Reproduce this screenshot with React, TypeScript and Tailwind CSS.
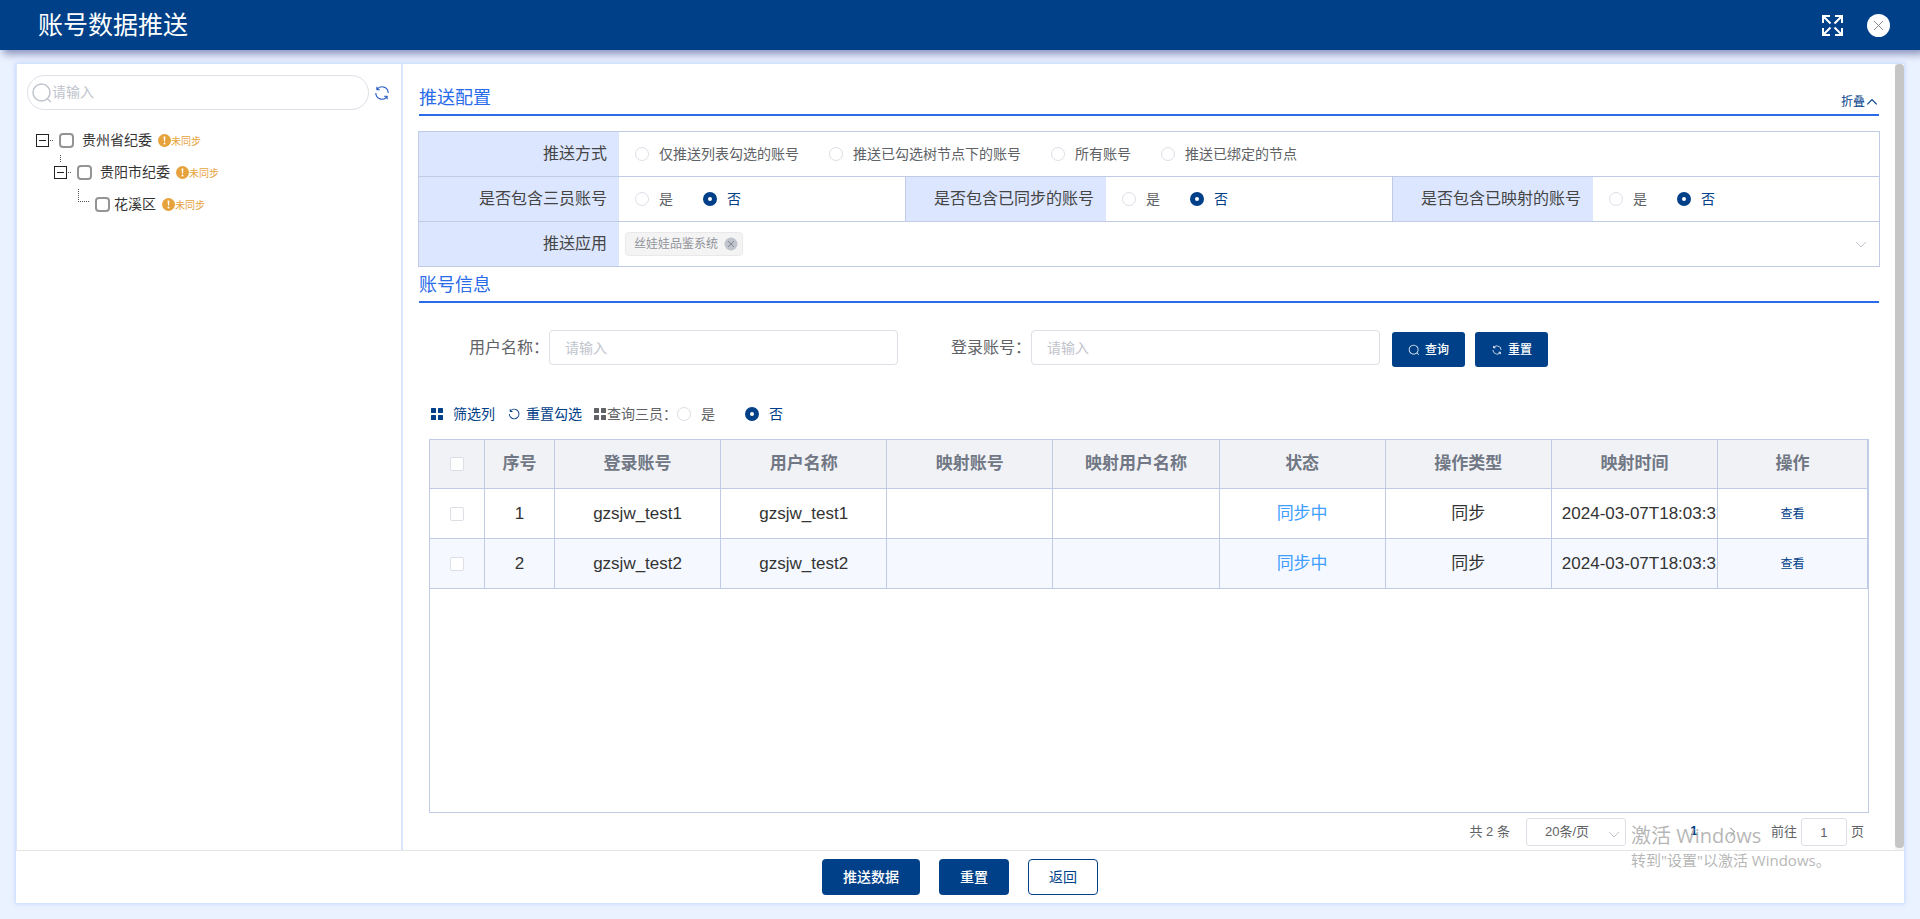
import type { ReactNode } from 'react';

const REFRESH =
  'M771.776 794.88A384 384 0 0 1 128 512h64a320 320 0 0 0 555.712 216.448H654.72a32 32 0 1 1 0-64h149.056a32 32 0 0 1 32 32v148.928a32 32 0 1 1-64 0v-50.56zM276.288 295.616h92.992a32 32 0 0 1 0 64H220.16a32 32 0 0 1-32-32V178.56a32 32 0 0 1 64 0v50.56A384 384 0 0 1 896.128 512h-64a320 320 0 0 0-555.776-216.384z';
const REFRESH_LEFT =
  'M289.088 296.704h92.992a32 32 0 0 1 0 64H232.96a32 32 0 0 1-32-32V179.712a32 32 0 0 1 64 0v50.56a384 384 0 0 1 643.84 282.88 384 384 0 0 1-383.936 384 384 384 0 0 1-384-384h64a320 320 0 1 0 640 0 320 320 0 0 0-555.712-216.448z';
const SEARCH =
  'm795.904 750.72 124.992 124.928a32 32 0 0 1-45.248 45.248L750.656 795.904a416 416 0 1 1 45.248-45.248zM480 832a352 352 0 1 0 0-704 352 352 0 0 0 0 704z';

function Glyph({ d, className }: { d: string; className: string }) {
  return (
    <svg viewBox="0 0 1024 1024" fill="currentColor" aria-hidden="true" className={className}>
      <path d={d} />
    </svg>
  );
}

function Chevron({ dir, className }: { dir: 'up' | 'down' | 'left' | 'right'; className: string }) {
  const points = {
    up: '2,8 6,4 10,8',
    down: '1,4 6,9 11,4',
    left: '8,1 3,6 8,11',
    right: '4,1 9,6 4,11',
  }[dir];
  return (
    <svg viewBox="0 0 12 12" fill="none" stroke="currentColor" aria-hidden="true" className={className}>
      <polyline points={points} />
    </svg>
  );
}

function GridIcon() {
  return (
    <svg viewBox="0 0 12 12" fill="currentColor" aria-hidden="true" className="size-3 shrink-0">
      <rect x="0" y="0" width="5" height="5" rx="0.5" />
      <rect x="7" y="0" width="5" height="5" rx="0.5" />
      <rect x="0" y="7" width="5" height="5" rx="0.5" />
      <rect x="7" y="7" width="5" height="5" rx="0.5" />
    </svg>
  );
}

function Radio({ name, label, checked }: { name: string; label: string; checked?: boolean }) {
  return (
    <label className="mr-[30px] flex items-center gap-[10px] whitespace-nowrap text-sm leading-5 text-[#606266] has-checked:text-[#004088]">
      <input
        type="radio"
        name={name}
        defaultChecked={checked}
        className="size-[14px] shrink-0 appearance-none rounded-full border border-[#dcdfe6] bg-white checked:border-[5px] checked:border-[#004088]"
      />
      {label}
    </label>
  );
}

function YesNo({ name }: { name: string }) {
  return (
    <>
      <Radio name={name} label="是" />
      <Radio name={name} label="否" checked />
    </>
  );
}

function Field({ label, children, divided }: { label: string; children: ReactNode; divided?: boolean }) {
  return (
    <div
      role="group"
      aria-label={label}
      className={divided ? 'flex min-w-0 flex-1 border-l border-[#c0cce6]' : 'flex min-w-0 flex-1'}
    >
      <div className="flex w-[200px] shrink-0 items-center justify-end bg-[#dce6ff] pr-3 text-base text-[#444]">
        {label}
      </div>
      <div className="flex min-w-0 flex-1 items-center">{children}</div>
    </div>
  );
}

function TreeRow({ name, indent, textGap, toggle }: { name: string; indent: string; textGap: string; toggle: boolean }) {
  return (
    <li className={`flex h-8 items-center ${indent}`}>
      {toggle ? (
        <button type="button" aria-label={`收起${name}`} className="mt-[2px] flex w-[23px] items-center">
          <svg viewBox="0 0 23 14" fill="none" shapeRendering="crispEdges" className="h-[14px] w-[23px]">
            <rect x="0.5" y="0.5" width="12" height="12" stroke="#222" />
            <path d="M3 6.5h7" stroke="#222" />
            <path d="M14 6.5h3" stroke="#555" strokeDasharray="1 1" />
          </svg>
        </button>
      ) : (
        <svg
          viewBox="0 0 17 14"
          fill="none"
          shapeRendering="crispEdges"
          aria-hidden="true"
          className="-mt-4 h-[14px] w-[17px]"
        >
          <path d="M0.5 0v12" stroke="#555" strokeDasharray="1 1" />
          <path d="M0 12.5h12" stroke="#555" strokeDasharray="1 1" />
        </svg>
      )}
      <label className={`flex items-center text-sm leading-5 text-[#333] ${textGap}`}>
        <input
          type="checkbox"
          className="size-[15px] appearance-none rounded-[4px] border-2 border-[#949494] bg-white checked:bg-[#004088]"
        />
        {name}
      </label>
      <span className="ml-1.5 flex items-center text-[10px] leading-4 text-[#e6a23c]">
        <svg viewBox="0 0 13 13" aria-hidden="true" className="size-[13px]">
          <circle cx="6.5" cy="6.5" r="6.5" fill="#e6a23c" />
          <path d="M5.6 2.4h1.8l-.4 5h-1z" fill="#fff" />
          <circle cx="6.5" cy="9.4" r="1" fill="#fff" />
        </svg>
        <span className="pt-[3px]">未同步</span>
      </span>
    </li>
  );
}

function SectionTitle({ title, className, children }: { title: string; className: string; children?: ReactNode }) {
  return (
    <div className={`mx-px flex items-end justify-between border-b-2 border-[#2a6be9] pb-1 ${className}`}>
      <h2 className="text-lg leading-6 text-[#2a6be9]">{title}</h2>
      {children}
    </div>
  );
}

function SearchField({ id, label }: { id: string; label: string }) {
  return (
    <div className="flex w-[429px] min-w-0 items-center">
      <label htmlFor={id} className="w-20 shrink-0 text-base text-[#606266]">
        {label}
      </label>
      <input
        id={id}
        placeholder="请输入"
        className="h-[35px] w-full min-w-0 rounded border border-[#dcdfe6] px-[15px] text-sm text-[#606266] outline-none placeholder:text-[#c0c4cc]"
      />
    </div>
  );
}

const columns = ['登录账号', '用户名称', '映射账号', '映射用户名称', '状态', '操作类型', '映射时间'];
const rows = [
  { no: 1, account: 'gzsjw_test1', status: '同步中', type: '同步', time: '2024-03-07T18:03:32' },
  { no: 2, account: 'gzsjw_test2', status: '同步中', type: '同步', time: '2024-03-07T18:03:32' },
];

const cell = 'overflow-hidden whitespace-nowrap border-r border-b border-[#c0cce6] px-[10px]';
const box =
  'mx-auto block size-[14px] appearance-none rounded-[2px] border border-[#dcdfe6] bg-white checked:bg-[#004088]';
const pageNav = 'flex h-7 w-[38px] items-center justify-center';

export default function App() {
  return (
    <div className="flex h-screen min-h-[640px] flex-col overflow-hidden bg-[#ebf2ff] font-['Liberation_Sans','Noto_Sans_CJK_SC',sans-serif]">
      <header className="z-10 flex h-[50px] shrink-0 items-center justify-between bg-[#004088] pr-[30px] pl-[38px] shadow-[4px_3px_8px_1px_#8890bb]">
        <h1 className="text-[25px] leading-9 text-white">账号数据推送</h1>
        <div className="flex items-center gap-6">
          <button type="button" aria-label="全屏">
            <svg viewBox="0 0 21 21" fill="none" stroke="#fff" strokeWidth="2" className="size-[21px]">
              <path d="M8 1H1v7M1 1l7.5 7.5M13 1h7v7M20 1l-7.500 7.500M8 20H1v-7M1 20l7.500-7.500M13 20h7v-7M20 20l-7.500-7.500" />
            </svg>
          </button>
          <button type="button" aria-label="关闭">
            <svg viewBox="0 0 23 23" className="size-[23px]">
              <circle cx="11.500" cy="11.500" r="11.500" fill="#fff" />
              <path d="M7 7l9 9M16 7l-9 9" stroke="#8c8c8c" fill="none" />
            </svg>
          </button>
        </div>
      </header>

      <div className="mx-4 mt-[14px] mb-4 flex min-h-0 flex-1 flex-col bg-white shadow-[0_0_4px_1px_#c3d8fb]">
        <div className="flex min-h-0 flex-1">
          <aside className="w-[387px] shrink-0 border-r-2 border-l border-[#dce6fa] pt-[11px] pl-[10px]">
            <div className="flex items-center gap-1">
              <div className="flex h-[35px] w-[342px] items-center rounded-full border border-[#dcdfe6] pl-1">
                <svg
                  viewBox="0 0 20 20"
                  fill="none"
                  stroke="currentColor"
                  strokeWidth="1.5"
                  aria-hidden="true"
                  className="size-5 shrink-0 text-[#c0c4cc]"
                >
                  <circle cx="9.5" cy="9.5" r="8.500" />
                  <path d="M15 15.500l4 3.500" />
                </svg>
                <input
                  aria-label="搜索"
                  placeholder="请输入"
                  className="h-[33px] min-w-0 flex-1 bg-transparent pb-0.5 text-sm outline-none placeholder:text-[#c0c4cc]"
                />
              </div>
              <button type="button" aria-label="刷新" className="text-[#2a5cc8]">
                <Glyph d={REFRESH} className="size-[18px]" />
              </button>
            </div>
            <div className="pt-[14px]">
              <ul>
                <TreeRow name="贵州省纪委" indent="pl-[9px]" textGap="gap-2" toggle />
                <li className="relative">
                  <svg
                    viewBox="0 0 1 8"
                    shapeRendering="crispEdges"
                    aria-hidden="true"
                    className="absolute -top-[1px] left-[33px] h-2 w-px"
                  >
                    <path d="M0.500 0v8" stroke="#555" strokeDasharray="1 1" />
                  </svg>
                  <ul>
                    <TreeRow name="贵阳市纪委" indent="pl-[27px]" textGap="gap-2" toggle />
                    <TreeRow name="花溪区" indent="pl-[51px]" textGap="gap-1" toggle={false} />
                  </ul>
                </li>
              </ul>
            </div>
          </aside>

          <main className="flex min-w-0 flex-1 flex-col px-[15px] pb-1">
            <SectionTitle title="推送配置" className="h-[52px]">
              <button type="button" className="flex items-center text-xs leading-4 text-[#004088]">
                折叠
                <Chevron dir="up" className="size-[14px]" />
              </button>
            </SectionTitle>

            <div className="mt-[15px] divide-y divide-[#c0cce6] border border-[#c0cce6]">
              <div className="flex min-h-[45px]">
                <Field label="推送方式">
                  <div className="flex flex-wrap pl-4">
                    <Radio name="mode" label="仅推送列表勾选的账号" />
                    <Radio name="mode" label="推送已勾选树节点下的账号" />
                    <Radio name="mode" label="所有账号" />
                    <Radio name="mode" label="推送已绑定的节点" />
                  </div>
                </Field>
              </div>
              <div className="flex min-h-[45px]">
                <Field label="是否包含三员账号">
                  <div className="flex pl-4">
                    <YesNo name="admin" />
                  </div>
                </Field>
                <Field label="是否包含已同步的账号" divided>
                  <div className="flex pl-4">
                    <YesNo name="synced" />
                  </div>
                </Field>
                <Field label="是否包含已映射的账号" divided>
                  <div className="flex pl-4">
                    <YesNo name="mapped" />
                  </div>
                </Field>
              </div>
              <div className="flex min-h-11">
                <Field label="推送应用">
                  <div className="flex flex-1 items-center justify-between pr-3 pl-1.5">
                    <span className="flex h-6 items-center gap-[6px] rounded border border-[#e9e9eb] bg-[#f4f4f5] pr-1 pl-2 text-xs text-[#909399]">
                      丝娃娃品鉴系统
                      <button type="button" aria-label="移除丝娃娃品鉴系统">
                        <svg viewBox="0 0 14 14" className="size-[14px]">
                          <circle cx="7" cy="7" r="6.500" fill="#c0c4cc" />
                          <path d="M4 4l6 6M10 4l-6 6" stroke="#85888f" fill="none" />
                        </svg>
                      </button>
                    </span>
                    <button type="button" aria-label="展开选项" className="text-[#c0c4cc]">
                      <Chevron dir="down" className="size-3" />
                    </button>
                  </div>
                </Field>
              </div>
            </div>

            <SectionTitle title="账号信息" className="h-9 shrink-0" />

            <form className="flex items-start pt-[27px] pl-[51px]" onSubmit={(e) => e.preventDefault()}>
              <SearchField id="user-name" label="用户名称：" />
              <div className="w-[53px] shrink" />
              <SearchField id="login-account" label="登录账号：" />
              <div className="flex gap-[10px] pt-0.5 pl-3">
                <button
                  type="submit"
                  className="flex h-[35px] w-[73px] items-center justify-center gap-[5px] rounded-[3px] bg-[#004088] text-xs font-medium text-white"
                >
                  <Glyph d={SEARCH} className="size-3" />
                  查询
                </button>
                <button
                  type="reset"
                  className="flex h-[35px] w-[73px] items-center justify-center gap-[5px] rounded-[3px] bg-[#004088] text-xs font-medium text-white"
                >
                  <Glyph d={REFRESH} className="size-3" />
                  重置
                </button>
              </div>
            </form>

            <div className="mt-[37px] flex h-5 items-center pl-[13px] text-sm leading-5 text-[#004088]">
              <button type="button" className="flex items-center gap-[10px]">
                <GridIcon />
                筛选列
              </button>
              <button type="button" className="ml-3 flex items-center gap-[5px]">
                <Glyph d={REFRESH_LEFT} className="size-[14px]" />
                重置勾选
              </button>
              <span className="ml-3 flex items-center gap-px text-[#606266]">
                <GridIcon />
                查询三员：
              </span>
              <YesNo name="query-admin" />
            </div>

            <div className="mx-[11px] mt-[15px] min-h-[150px] flex-1 border border-[#c0cce6]">
              <table className="w-full table-fixed border-separate border-spacing-0 text-center text-[17px] leading-6 text-[#333]">
                <colgroup>
                  <col className="w-[55px]" />
                  <col className="w-[70px]" />
                  {columns.map((c) => (
                    <col key={c} />
                  ))}
                  <col className="w-[150px]" />
                </colgroup>
                <thead>
                  <tr className="h-[49px] bg-[#f0f2f6] text-[#717784]">
                    <th className={cell}>
                      <input type="checkbox" aria-label="全选" className={box} />
                    </th>
                    <th className={cell}>序号</th>
                    {columns.map((c) => (
                      <th key={c} className={cell}>
                        {c}
                      </th>
                    ))}
                    <th className={cell}>操作</th>
                  </tr>
                </thead>
                <tbody>
                  {rows.map((r) => (
                    <tr key={r.no} className="h-[50px] even:bg-[#f5f9ff]">
                      <td className={cell}>
                        <input type="checkbox" aria-label={`选择 ${r.account}`} className={box} />
                      </td>
                      <td className={cell}>{r.no}</td>
                      <td className={cell}>{r.account}</td>
                      <td className={cell}>{r.account}</td>
                      <td className={cell} />
                      <td className={cell} />
                      <td className={cell}>
                        <span className="text-[#409eff]">{r.status}</span>
                      </td>
                      <td className={cell}>{r.type}</td>
                      <td className="overflow-hidden whitespace-nowrap border-r border-b border-[#c0cce6] pl-[10px] text-left">
                        {r.time}
                      </td>
                      <td className={cell}>
                        <a href="#view" className="block text-xs text-[#004088]">
                          查看
                        </a>
                      </td>
                    </tr>
                  ))}
                </tbody>
              </table>
            </div>

            <nav
              aria-label="分页"
              className="relative mt-[5px] flex h-7 items-center justify-end pr-4 text-[13px] text-[#606266]"
            >
              <span>共 2 条</span>
              <span className="relative ml-4">
                <select
                  aria-label="每页条数"
                  className="h-7 w-[100px] appearance-none rounded-[3px] border border-[#dcdfe6] bg-white pl-[18px] text-[13px] outline-none"
                >
                  <option>20条/页</option>
                  <option>50条/页</option>
                </select>
                <Chevron dir="down" className="pointer-events-none absolute top-[10px] right-[6px] size-3 text-[#c0c4cc]" />
              </span>
              <button type="button" aria-label="上一页" className={`ml-[11px] text-[#a8abb2] ${pageNav}`}>
                <Chevron dir="left" className="size-[10px]" />
              </button>
              <button type="button" aria-current="page" className={`pb-0.5 font-bold text-[#004088] ${pageNav}`}>
                1
              </button>
              <button type="button" aria-label="下一页" className={`text-[#606266] ${pageNav}`}>
                <Chevron dir="right" className="size-[10px]" />
              </button>
              <label className="ml-5 flex items-center gap-1">
                前往
                <input
                  defaultValue="1"
                  className="h-7 w-[46px] rounded-[3px] border border-[#dcdfe6] bg-white text-center outline-none"
                />
                页
              </label>
              <div className="pointer-events-none absolute top-1 right-[55px] w-[194px] whitespace-nowrap font-['Open_Sans','Noto_Sans_CJK_SC',sans-serif] text-[#a9a9a9]/85">
                <p className="text-[20px] leading-7">激活 Windows</p>
                <p className="text-[15px] leading-5">
                  转到"设置"以激活 Windows。
                </p>
              </div>
            </nav>
          </main>

          <div aria-hidden="true" className="w-[9px] shrink-0 bg-[#f5f5f5] pb-0.5">
            <div className="h-full rounded-[4px] bg-[#c6c6c6]" />
          </div>
        </div>

        <footer className="flex h-[53px] shrink-0 items-center justify-center gap-[19px] border-t border-[#e4e4e4] text-sm">
          <button type="button" className="h-9 rounded bg-[#004088] px-[21px] font-medium text-white">
            推送数据
          </button>
          <button type="button" className="h-9 rounded bg-[#004088] px-[21px] font-medium text-white">
            重置
          </button>
          <button type="button" className="h-9 rounded border border-[#004088] bg-white px-5 text-[#004088]">
            返回
          </button>
        </footer>
      </div>
    </div>
  );
}
